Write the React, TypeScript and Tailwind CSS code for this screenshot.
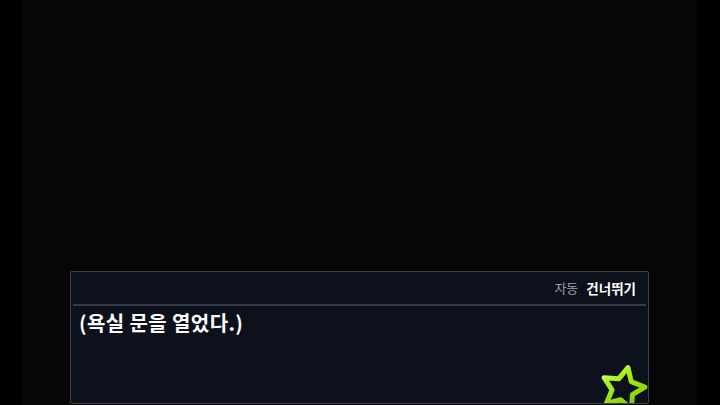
const font = { fontFamily: '"Noto Sans CJK KR", "Noto Sans", sans-serif' };

function StarIcon() {
  return (
    <svg width="60" height="60" viewBox="-30 -30 60 60" className="absolute left-[522px] top-[87px]">
      <defs>
        <linearGradient id="starg" x1="0" y1="0" x2="1" y2="1">
          <stop offset="0" stopColor="#f4ffc8" />
          <stop offset="0.3" stopColor="#a8f21c" />
          <stop offset="0.75" stopColor="#86d80a" />
          <stop offset="1" stopColor="#4fa800" />
        </linearGradient>
      </defs>
      <polygon
        transform="rotate(13)"
        points="0,-22 6.5,-8.9 20.9,-6.8 10.5,3.4 12.9,17.8 0,11 -12.9,17.8 -10.5,3.4 -20.9,-6.8 -6.5,-8.9"
        fill="none"
        stroke="url(#starg)"
        strokeWidth="5"
        strokeLinejoin="round"
      />
    </svg>
  );
}

export default function App() {
  return (
    <div className="w-[720px] h-[405px] bg-black flex overflow-hidden" style={font}>
      <div className="ml-[22px] w-[675px] h-full bg-[#060606] flex flex-col justify-end pb-[1px]">
        <div className="relative mx-[48px] h-[133px] bg-[#0c111b] border border-[#3b414d] rounded-[2px] overflow-hidden">
          <div className="mx-[2px] h-[34px] border-b-2 border-[#343b47] flex items-center justify-end gap-[8px] pr-[10px]">
            <span className="text-[13px] text-[#9aa0a8]">자동</span>
            <span className="text-[13.5px] text-white font-bold">건너뛰기</span>
          </div>
          <p className="px-[8px] pt-[4px] text-[20px] leading-[26px] tracking-[0.4px] font-bold text-white">(욕실 문을 열었다.)</p>
          <StarIcon />
        </div>
      </div>
    </div>
  );
}
